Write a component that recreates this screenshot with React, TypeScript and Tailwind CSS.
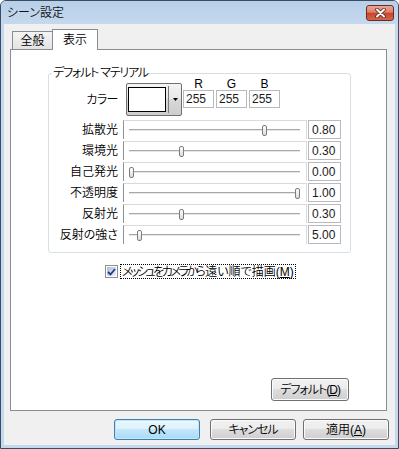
import React from 'react';

const FONT = "font-['Liberation_Sans','Noto_Sans_CJK_JP',sans-serif] font-[350] [font-feature-settings:'palt']";

const rows = [
  { label: '拡散光', value: 0.8, text: '0.80' },
  { label: '環境光', value: 0.3, text: '0.30' },
  { label: '自己発光', value: 0, text: '0.00' },
  { label: '不透明度', value: 1, text: '1.00' },
  { label: '反射光', value: 0.3, text: '0.30' },
  { label: '反射の強さ', value: 0.05, text: '5.00' },
];

const Slider = ({ value }: { value: number }) => (
  <div className="relative w-[184px] h-full border-l border-t border-r border-l-[#8f9296] border-t-[#dadada] border-r-[#dadada]">
    {/* track */}
    <div className="absolute left-[5px] right-[6px] top-[8px] h-[3px] border-t border-t-[#a8a8a8] border-b border-b-white bg-[#e6e6e6]" />
    {/* thumb */}
    <div
      className="absolute top-[4px] w-[5px] h-[11px] rounded-[2px] border border-[#7d7d7d] bg-gradient-to-b from-white to-[#dcdcdc]"
      style={{ left: 8 + value * 166 - 3 }}
    />
  </div>
);

const TextBox = ({ text, className = '' }: { text: string; className?: string }) => (
  <div className={`flex items-center bg-white border border-[#b7bac0] text-[12px] leading-none text-[#1a1a1a] ${className}`}>
    {text}
  </div>
);

const Button = ({
  children,
  primary = false,
  className = '',
}: {
  children: React.ReactNode;
  primary?: boolean;
  className?: string;
}) => (
  <div
    className={`flex items-center justify-center rounded-[3px] border text-[12px] leading-none text-black ${
      primary
        ? 'border-[#3c7fb1] bg-[linear-gradient(#ecf7fd,#dbf1fc_50%,#c2e7fb_50%,#a9daf5)] shadow-[inset_0_0_0_1px_#bfe6fb]'
        : 'border-[#707070] bg-[linear-gradient(#f2f2f2,#ebebeb_50%,#dddddd_50%,#cfcfcf)] shadow-[inset_0_0_0_1px_#fbfbfb]'
    } ${className}`}
  >
    {children}
  </div>
);

export default function App() {
  return (
    <div className={`w-[399px] h-[449px] flex flex-col border border-[#3c4b5f] rounded-t-[6px] bg-[#c4d8ee] ${FONT}`}>
      {/* Title bar */}
      <div className="h-[23px] flex items-start justify-between rounded-t-[5px] bg-gradient-to-b from-[#b7cfe9] to-[#c5d9ee]">
        <span className="pl-[6px] pt-[5px] text-[12px] leading-[14px] text-[#111]">シーン設定</span>
        <div className="mt-[4px] mr-[4px] w-[28px] h-[16px] rounded-[3px] border border-[#6b2c20] bg-[linear-gradient(#eca595,#dc7f69_45%,#c8432a_50%,#d5644a)] flex items-center justify-center">
          <svg width="13" height="10" viewBox="0 0 13 10">
            <path d="M3 1.5 L10 8.5 M10 1.5 L3 8.5" stroke="#5a241a" strokeWidth="3.6" strokeLinecap="round" />
            <path d="M3 1.5 L10 8.5 M10 1.5 L3 8.5" stroke="#ffffff" strokeWidth="2" strokeLinecap="round" />
          </svg>
        </div>
      </div>

      {/* Client area */}
      <div className="flex-1 mx-[3px] mb-[3px] flex flex-col bg-[#f0f0f0]">
        {/* Tabs */}
        <div className="mt-[5px] ml-[8px] h-[20px] flex items-end">
          <div className="w-[41px] h-[18px] flex items-center justify-center border border-b-0 border-[#898c95] bg-gradient-to-b from-[#f4f4f4] to-[#e3e3e3] text-[12px] leading-none text-black">
            全般
          </div>
          <div className="relative z-10 ml-[-1px] mb-[-1px] w-[46px] h-[21px] flex items-start justify-center pt-[3px] border border-b-0 border-[#898c95] bg-white text-[12px] leading-[14px] text-black">
            表示
          </div>
        </div>

        {/* Tab panel */}
        <div className="ml-[6px] w-[377px] h-[362px] flex flex-col border border-[#898c95] bg-white">
          {/* Group box */}
          <div className="relative ml-[37px] mt-[23px] w-[303px] border border-[#d5dfe5] rounded-[3px] pt-[4px] pb-[8px]">
            <span className="absolute left-[3px] top-[-8px] px-[1px] bg-white text-[12px] leading-[14px] tracking-[-1.2px] text-black">
              デフォルト マテリアル
            </span>

            {/* Color row */}
            <div className="flex items-start h-[38px]">
              <div className="w-[69px] mt-[5px] h-[33px] flex items-center justify-end text-[12px] leading-none tracking-[-0.5px] text-black">
                カラー
              </div>
              <div className="ml-[8px] mt-[5px] w-[56px] h-[33px] flex items-center rounded-[2px] border border-[#707070] bg-[linear-gradient(#f4f4f4,#e6e6e6_50%,#d8d8d8_50%,#cdcdcd)]">
                <div className="ml-[1px] w-[38px] h-[25px] border border-black bg-white" />
                <div className="ml-[2px] w-px h-[27px] bg-[#7a7a7a]" />
                <div className="flex-1 flex justify-center">
                  <svg width="5" height="3" viewBox="0 0 5 3">
                    <path d="M0 0 H5 L2.5 3 Z" fill="#000" />
                  </svg>
                </div>
              </div>
              <div className="ml-px flex gap-[2px]">
                {['R', 'G', 'B'].map((c) => (
                  <div key={c} className="flex flex-col items-center">
                    <span className="h-[12px] text-[12px] leading-[12px] text-black">{c}</span>
                    <TextBox text="255" className="w-[31px] h-[18px] pl-[2px]" />
                  </div>
                ))}
              </div>
            </div>

            {/* Slider rows */}
            <div className="mt-[4px] flex flex-col gap-[2px]">
              {rows.map((r) => (
                <div key={r.label} className="flex items-center h-[19px]">
                  <div className="w-[69px] text-right text-[12px] leading-none text-black">{r.label}</div>
                  <div className="ml-[5px] h-full">
                    <Slider value={r.value} />
                  </div>
                  <TextBox text={r.text} className="ml-px w-[33px] h-full pl-[3px]" />
                </div>
              ))}
            </div>
          </div>

          {/* Checkbox */}
          <div className="ml-[94px] mt-[11px] flex items-center h-[15px]">
            <div className="w-[13px] h-[13px] border border-[#8e8f8f] bg-white p-px">
              <div className="w-full h-full bg-gradient-to-br from-[#aebcd8] to-[#eef3fb] flex items-center justify-center">
                <svg width="9" height="8" viewBox="0 0 9 8">
                  <path d="M1 4 L3.5 6.5 L8 1" stroke="#1d3d8a" strokeWidth="1.8" fill="none" />
                </svg>
              </div>
            </div>
            <span className="ml-[2px] h-[15px] px-[1px] flex items-center border border-dotted border-black text-[12px] leading-none text-black whitespace-nowrap">
              <span className="tracking-[-2.5px]">メッシュをカメラから</span>
              <span className="ml-[2px]">遠</span>
              <span className="tracking-[-2px]">い</span>
              <span className="ml-[2px]">順</span>
              <span className="tracking-[-2px]">で</span>
              <span className="ml-[2px]">描画(<span className="underline">M</span>)</span>
            </span>
          </div>

          {/* Default button */}
          <Button className="mt-auto mb-[9px] mr-[37px] self-end w-[78px] h-[23px] tracking-[-1px]">
            デフォルト(<span className="underline">D</span>)
          </Button>
        </div>

        {/* Dialog buttons */}
        <div className="mt-[8px] pr-[6px] flex justify-end">
          <Button primary className="w-[86px] h-[21px]">OK</Button>
          <Button className="ml-[10px] w-[86px] h-[21px] tracking-[-1px]">キャンセル</Button>
          <Button className="ml-[7px] w-[86px] h-[21px]">
            適用(<span className="underline">A</span>)
          </Button>
        </div>
      </div>
    </div>
  );
}
